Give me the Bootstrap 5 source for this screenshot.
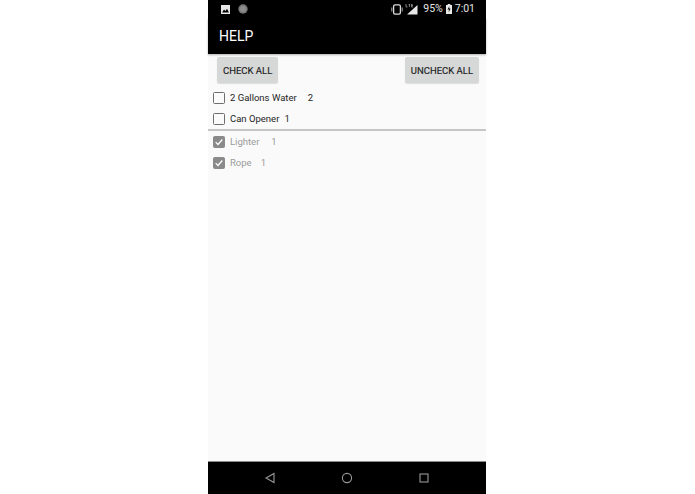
<!DOCTYPE html>
<html lang="en">
<head>
<meta charset="utf-8">
<title>Help</title>
<link rel="stylesheet" href="https://cdn.jsdelivr.net/npm/bootstrap@5.3.0/dist/css/bootstrap.min.css">
<style>
html,body{height:494px;overflow:hidden;background:#fff;}
body{font-family:Roboto,"Liberation Sans",sans-serif;}
.phone-frame{width:278px;height:494px;margin-left:208px;background:#fafafa;}
.status-strip{height:18px;background:#000;color:#e4e4e4;font-size:10.5px;padding:0 11px 0 13px;}
.status-strip svg{display:block;}
.gap-vib{margin-right:2px;}
.gap-lte{margin-right:5px;}
.gap-batt{margin:0 3px 0 3px;}
.app-strip{height:36px;background:#000;color:#fff;font-size:14px;padding:0 11px;line-height:1;box-shadow:0 1px 2px rgba(0,0,0,.3);}
.btn-strip{padding:3px 7px 0 9px;}
.flat-btn{background:#d6d7d7;color:#1c1c1c;font-size:9.5px;font-weight:400;-webkit-text-stroke:.15px #1c1c1c;height:26px;line-height:27px;padding:0 6px;border-radius:2px;border:0;box-shadow:0 1px 1px rgba(0,0,0,.12);}
.item-row{height:21px;padding-left:5px;font-size:9.5px;color:#1f1f1f;}
.item-row.is-done{color:#9a9a9a;}
.row-label,.qty-a,.qty-b,.qty-c,.qty-d{padding-top:2px;}
.tick-box{width:12px;height:12px;border:1.5px solid #6e6e6e;border-radius:1.5px;margin-right:5px;flex:none;}
.tick-box.is-on{background:#8a8a8a;border-color:#8a8a8a;}
.tick-box svg{display:block;width:100%;height:100%;}
.qty-a{margin-left:11px;}
.qty-b{margin-left:5px;}
.qty-c{margin-left:12px;}
.qty-d{margin-left:9px;}
.list-rule{height:2px;background:#c6c6c6;}
.list-area{padding-top:4px;}
.nav-strip{height:33px;background:#000;border-top:1px solid #8a8a8a;gap:61px;}
</style>
</head>
<body>
<div class="phone-frame d-flex flex-column">
  <div class="status-strip d-flex align-items-center justify-content-between">
    <div class="d-flex align-items-center gap-2">
      <svg width="9" height="9" viewBox="0 0 9 9"><rect width="9" height="9" fill="#e8e8e8"/><path d="M1 7.5 3 4.5 4.5 6 6 3.8 8 7.5Z" fill="#000"/></svg>
      <svg width="10" height="10" viewBox="0 0 10 10"><circle cx="5" cy="5" r="4.7" fill="#777"/><circle cx="5" cy="5" r="3" fill="#8c8c8c"/></svg>
    </div>
    <div class="d-flex align-items-center">
      <svg width="12" height="11" viewBox="0 0 12 11" class="gap-vib"><path d="M.8 3.5v4M11.2 3.5v4" stroke="#aaa" fill="none"/><rect x="2.6" y=".8" width="6.8" height="9.4" rx="1.4" fill="none" stroke="#ddd" stroke-width="1.3"/></svg>
      <svg width="13" height="11" viewBox="0 0 13 11" class="gap-lte"><path d="M12.5 1v9.5H2Z" fill="#e8e8e8"/><path d="M1 0v3h1.5M3.4 0h2M4.4 0v3M8 0H6.6v3H8M6.6 1.5H8" stroke="#ccc" stroke-width=".6" fill="none"/></svg>
      <span>95%</span>
      <svg width="6" height="10" viewBox="0 0 6 10" class="gap-batt"><rect y="1" width="6" height="9" fill="#e8e8e8"/><rect x="1.7" width="2.6" height="1" fill="#e8e8e8"/><path d="M3.4 2 1.5 5.5H3L2.6 8.5 4.6 4.6H3.1Z" fill="#000"/></svg>
      <span>7:01</span>
    </div>
  </div>
  <div class="app-strip d-flex align-items-center">HELP</div>
  <div class="btn-strip d-flex justify-content-between">
    <button type="button" class="btn flat-btn">CHECK ALL</button>
    <button type="button" class="btn flat-btn">UNCHECK ALL</button>
  </div>
  <div class="list-area">
    <div class="item-row d-flex align-items-center"><span class="tick-box"></span><span class="row-label">2 Gallons Water</span><span class="qty-a">2</span></div>
    <div class="item-row d-flex align-items-center"><span class="tick-box"></span><span class="row-label">Can Opener</span><span class="qty-b">1</span></div>
    <div class="list-rule"></div>
    <div class="item-row is-done d-flex align-items-center"><span class="tick-box is-on"><svg viewBox="0 0 12 12"><path d="M2 6.2 4.8 9 10 3" fill="none" stroke="#fff" stroke-width="1.5"/></svg></span><span class="row-label">Lighter</span><span class="qty-c">1</span></div>
    <div class="item-row is-done d-flex align-items-center"><span class="tick-box is-on"><svg viewBox="0 0 12 12"><path d="M2 6.2 4.8 9 10 3" fill="none" stroke="#fff" stroke-width="1.5"/></svg></span><span class="row-label">Rope</span><span class="qty-d">1</span></div>
  </div>
  <div class="flex-grow-1"></div>
  <div class="nav-strip d-flex align-items-center justify-content-center">
    <svg width="16" height="16" viewBox="0 0 16 16"><path d="M12 3.5v9L4 8Z" fill="none" stroke="#999" stroke-width="1.1"/></svg>
    <svg width="16" height="16" viewBox="0 0 16 16"><circle cx="8" cy="8" r="4.6" fill="none" stroke="#999" stroke-width="1.1"/></svg>
    <svg width="16" height="16" viewBox="0 0 16 16"><rect x="4" y="4" width="8" height="8" fill="none" stroke="#999" stroke-width="1.1"/></svg>
  </div>
</div>
<script src="https://cdn.jsdelivr.net/npm/bootstrap@5.3.0/dist/js/bootstrap.bundle.min.js"></script>
</body>
</html>
